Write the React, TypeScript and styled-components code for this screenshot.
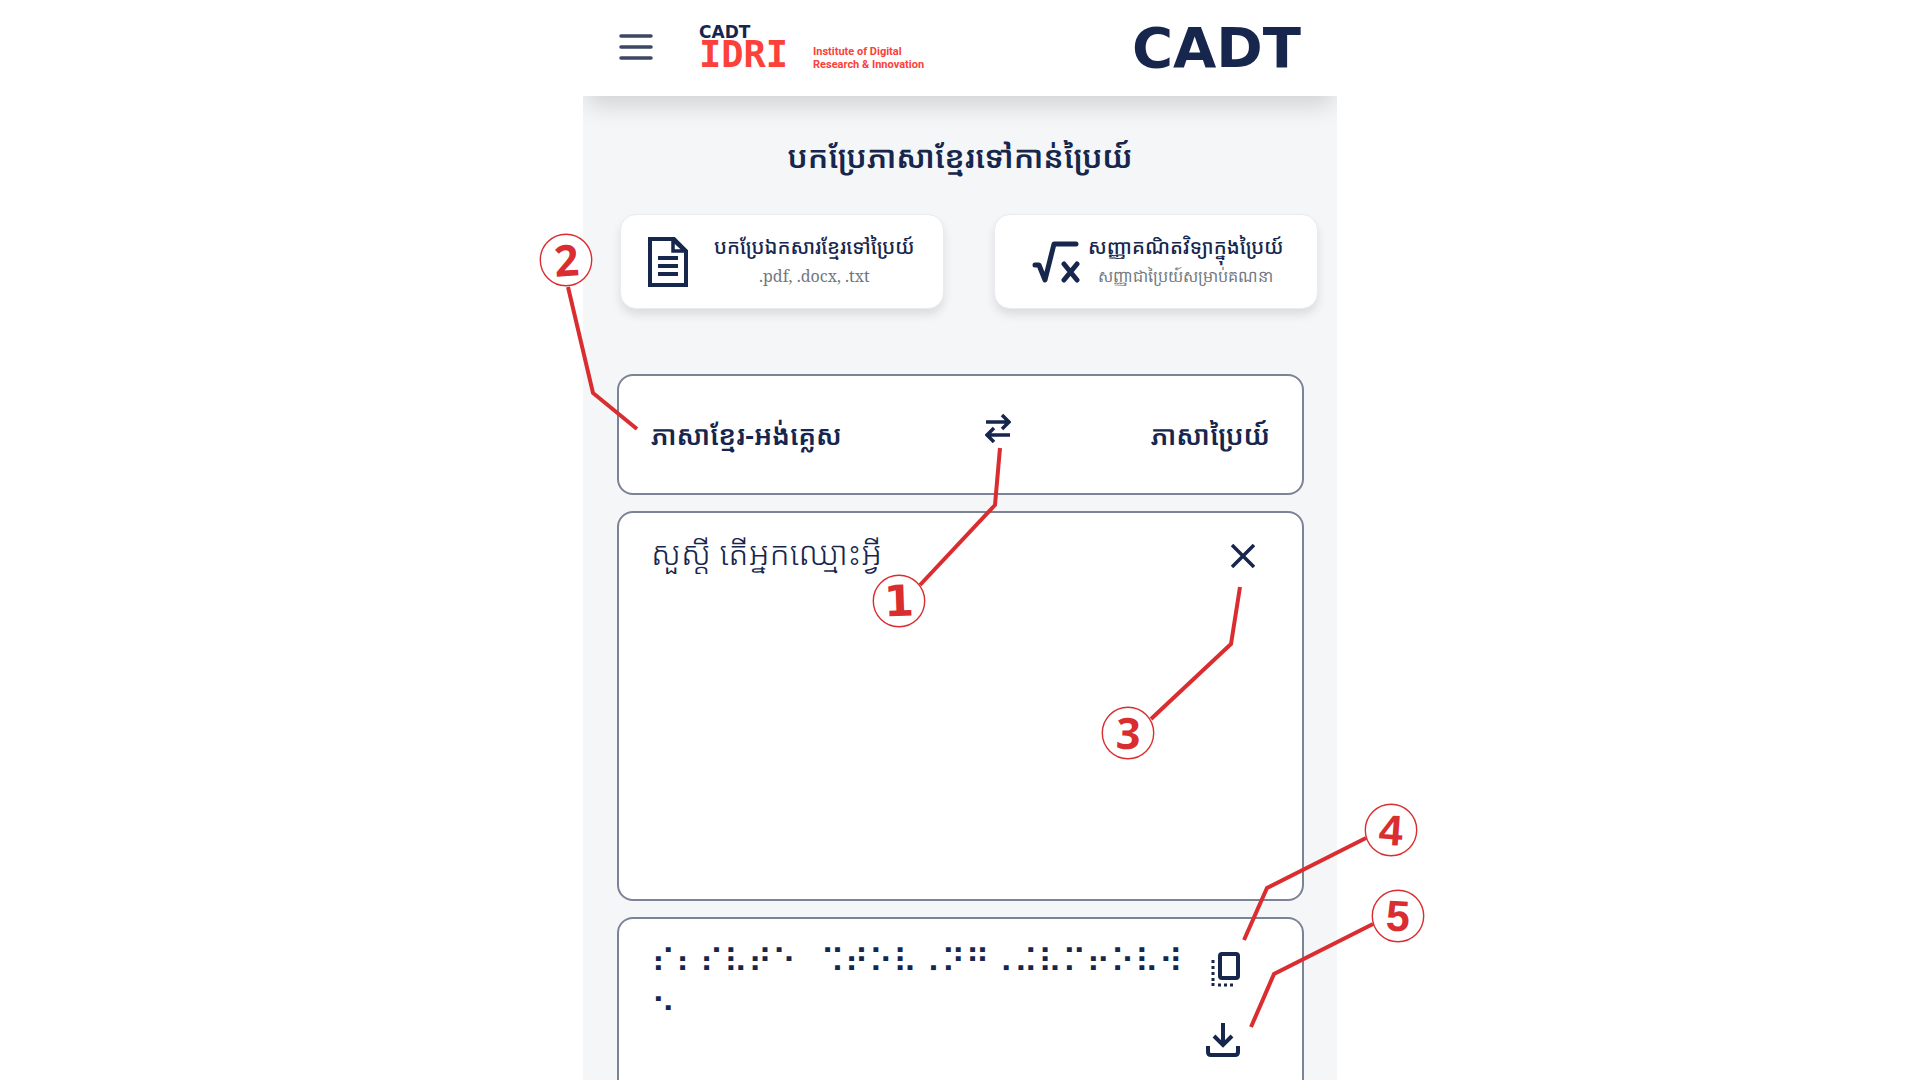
import React from "react";
import styled, { createGlobalStyle } from "styled-components";

const NAVY = "#16264c";
const RED = "#d92d2f";
const KHMER = '"Noto Sans Khmer", "Khmer OS Siemreap", "Noto Sans", sans-serif';

const GlobalStyle = createGlobalStyle`
  * { box-sizing: border-box; }
  body { margin: 0; background: #fff; color: ${NAVY}; font-family: ${KHMER}; }
  button { margin: 0; padding: 0; border: 0; background: none; color: inherit; font: inherit; cursor: pointer; }
  svg { display: block; }
  h1, p { margin: 0; }
`;

const Page = styled.div`
  display: flex;
  justify-content: center;
  overflow: hidden;
`;

const Screen = styled.div`
  position: relative;
  display: flex;
  flex-direction: column;
  width: 100%;
  max-width: 754px;
  min-height: 100vh;
  background: #f4f6f8;
`;

const Header = styled.header`
  display: flex;
  align-items: center;
  height: 96px;
  padding: 0 36px;
  background: #fff;
  box-shadow: 0 12px 24px -4px rgba(0, 0, 0, 0.16);
  clip-path: inset(0 0 -48px 0);
`;

const Menu = styled.button`
  margin-right: 46px;
`;

const Institute = styled.a`
  display: grid;
  grid-template-columns: 114px auto;
  align-items: end;
  color: #fb4139;
  font-family: "DejaVu Sans", sans-serif;
  font-weight: 700;
  text-decoration: none;
`;

const InstituteParent = styled.span`
  grid-column: 1 / -1;
  color: ${NAVY};
  font-size: 17px;
  line-height: 14px;
`;

const InstituteShort = styled.span`
  font-family: "DejaVu Sans Mono", monospace;
  font-size: 37px;
  line-height: 32px;
`;

const InstituteName = styled.span`
  font-family: Roboto, sans-serif;
  font-size: 11px;
  line-height: 13px;
`;

const Brand = styled.a`
  margin-left: auto;
  color: ${NAVY};
  font-family: "DejaVu Sans", sans-serif;
  font-size: 56px;
  font-weight: 700;
  line-height: 64px;
  text-decoration: none;
`;

const Title = styled.h1`
  padding-top: 36px;
  font-size: 31px;
  font-weight: 600;
  line-height: 48px;
  text-align: center;
`;

const Shortcuts = styled.div`
  display: grid;
  grid-template-columns: 1fr 1fr;
  gap: 50px;
  padding: 34px 19px 0 37px;
`;

const Shortcut = styled.button<{ $gap: number; $inset: number }>`
  display: flex;
  align-items: center;
  gap: ${(p) => p.$gap}px;
  height: 95px;
  padding-left: ${(p) => p.$inset}px;
  border: 1px solid #e9ebef;
  border-radius: 16px;
  background: #fff;
  box-shadow: 0 6px 10px rgba(0, 0, 0, 0.1);
  white-space: nowrap;
`;

const ShortcutText = styled.span`
  display: flex;
  flex-direction: column;
  align-items: center;
  padding-bottom: 2px;
`;

const ShortcutTitle = styled.span`
  font-size: 20px;
  font-weight: 500;
  line-height: 30px;
`;

const ShortcutNote = styled.span`
  color: #6f7780;
  font-family: "Noto Serif", "DejaVu Serif", serif;
  font-size: 16px;
  line-height: 28px;
`;

const Boxes = styled.main`
  display: flex;
  flex: 1;
  flex-direction: column;
  gap: 16px;
  padding: 65px 33px 0 34px;
`;

const Box = styled.section`
  display: flex;
  justify-content: space-between;
  border: 2px solid #7a8496;
  border-radius: 16px;
  background: #fff;
`;

const Languages = styled(Box)`
  display: grid;
  grid-template-columns: 1fr auto 1fr;
  align-items: center;
  height: 121px;
  padding: 0 32px;
  font-size: 27px;
  font-weight: 600;
`;

const Language = styled.span<{ $end?: boolean }>`
  text-align: ${(p) => (p.$end ? "right" : "left")};
  white-space: nowrap;
`;

const Swap = styled.button`
  padding: 0 0 14px 74px;
`;

const Source = styled(Box)`
  height: 390px;
  padding: 15px 47px 15px 32px;
  align-items: flex-start;
`;

const SourceInput = styled.textarea`
  flex: 1;
  height: 340px;
  padding: 0;
  border: 0;
  outline: 0;
  background: none;
  resize: none;
  color: ${NAVY};
  font-family: ${KHMER};
  font-size: 33px;
  font-weight: 300;
  line-height: 50px;
`;

const Clear = styled.button`
  margin-top: 16px;
`;

const Result = styled(Box)`
  flex: 1;
  border-bottom: 0;
  border-radius: 16px 16px 0 0;
  padding: 18px 62px 0 32px;
`;

const Braille = styled.p`
  width: 540px;
  font-family: "DejaVu Sans", sans-serif;
  font-size: 33px;
  line-height: 49px;
`;

const Tools = styled.div`
  display: flex;
  flex-direction: column;
  align-items: flex-end;
  gap: 36px;
  padding-top: 15px;
`;

const Callouts = styled.div`
  position: absolute;
  inset: 0;
  pointer-events: none;
`;

const Leaders = styled.svg`
  position: absolute;
  top: 0;
  left: 0;
  overflow: visible;
`;

const Marker = styled.span<{ $x: number; $y: number; $turn: number; $face: string }>`
  position: absolute;
  top: ${(p) => p.$y - 26}px;
  left: ${(p) => p.$x - 26}px;
  display: flex;
  align-items: center;
  justify-content: center;
  width: 52px;
  height: 52px;
  color: ${RED};
  font-family: ${(p) => p.$face}, sans-serif;
  font-size: 43px;
  font-weight: 700;
  line-height: 54px;

  span { transform: rotate(${(p) => p.$turn}deg); }
`;

const markers = [
  { n: 1, x: 316, y: 601, turn: -2, face: '"DejaVu Sans"', line: "337,585 412,505 417,448" },
  { n: 2, x: -17, y: 260, turn: -4, face: '"Noto Sans"', line: "-15,287 10,393 54,429" },
  { n: 3, x: 545, y: 733, turn: 2, face: '"Noto Sans"', line: "568,719 648,644 657,587" },
  { n: 4, x: 808, y: 830, turn: 4, face: '"Liberation Sans"', line: "783,838 684,888 661,940" },
  { n: 5, x: 815, y: 916, turn: 3, face: '"Liberation Sans"', line: "790,924 691,974 668,1027" },
];

export default function App() {
  return (
    <Page>
      <GlobalStyle />
      <Screen>
        <Header>
          <Menu aria-label="Menu">
            <svg width="34" height="28" viewBox="0 0 34 28" stroke="#3c4763" strokeWidth="3.5" strokeLinecap="round">
              <path d="M2 2h30M2 13h30M2 24h30" />
            </svg>
          </Menu>
          <Institute href="#">
            <InstituteParent>CADT</InstituteParent>
            <InstituteShort>IDRI</InstituteShort>
            <InstituteName>
              Institute of Digital
              <br />
              Research &amp; Innovation
            </InstituteName>
          </Institute>
          <Brand href="#">CADT</Brand>
        </Header>

        <Title>បកប្រែភាសាខ្មែរទៅកាន់ប្រៃយ៍</Title>

        <Shortcuts>
          <Shortcut $gap={26} $inset={27}>
            <svg width="40" height="50" viewBox="0 0 40 50" fill="none" stroke={NAVY} strokeWidth="4">
              <path d="M2 2h24l12 12v34H2z" />
              <path d="M25 3v11h12z" fill="#fff" strokeWidth="3.5" />
              <path d="M10 21h20M10 29h20M10 37h20" />
            </svg>
            <ShortcutText>
              <ShortcutTitle>បកប្រែឯកសារខ្មែរទៅប្រៃយ៍</ShortcutTitle>
              <ShortcutNote>.pdf, .docx, .txt</ShortcutNote>
            </ShortcutText>
          </Shortcut>
          <Shortcut $gap={6} $inset={37}>
            <svg width="50" height="44" viewBox="0 0 50 44" fill="none" stroke={NAVY} strokeWidth="5" strokeLinecap="round" strokeLinejoin="round">
              <path d="M3 25h4l6 15L22 4h22M32 24l13 16M45 24L32 40" />
            </svg>
            <ShortcutText>
              <ShortcutTitle>សញ្ញាគណិតវិទ្យាក្នុងប្រៃយ៍</ShortcutTitle>
              <ShortcutNote>សញ្ញាជាប្រៃយ៍សម្រាប់គណនា</ShortcutNote>
            </ShortcutText>
          </Shortcut>
        </Shortcuts>

        <Boxes>
          <Languages>
            <Language>ភាសាខ្មែរ-អង់គ្លេស</Language>
            <Swap aria-label="Swap languages">
              <svg width="26" height="30" viewBox="0 0 26 30" fill="none" stroke={NAVY} strokeWidth="3.5">
                <path d="M1 9h22M17 2l7 7-7 7M25 22H3M9 15l-7 7 7 7" />
              </svg>
            </Swap>
            <Language $end>ភាសាប្រៃយ៍</Language>
          </Languages>

          <Source>
            <SourceInput aria-label="Khmer text" defaultValue="សួស្តី តើអ្នកឈ្មោះអ្វី" />
            <Clear aria-label="Clear">
              <svg width="24" height="24" viewBox="0 0 24 24" stroke={NAVY} strokeWidth="3.5">
                <path d="M1 1l22 22M23 1L1 23" />
              </svg>
            </Clear>
          </Source>

          <Result>
            <Braille>{"⠎⠆⠎⠧⠞⠑\u2800⠩⠞⠕⠧⠠⠝⠛⠠⠬⠧⠍⠖⠕⠧⠺ ⠑"}</Braille>
            <Tools>
              <button aria-label="Copy">
                <svg width="30" height="35" viewBox="0 0 30 35" fill="none" stroke={NAVY}>
                  <rect x="10" y="2" width="18" height="24" rx="2" strokeWidth="4" />
                  <path d="M3 8v3M3 14v3M3 20v3M3 26v3M3 31v3M8 33h3M14 33h3M20 33h3" strokeWidth="3" />
                </svg>
              </button>
              <button aria-label="Download">
                <svg width="34" height="34" viewBox="0 0 34 34" fill="none" stroke={NAVY} strokeWidth="4">
                  <path d="M17 0v22M8 13l9 9 9-9M2 23v6q0 3 3 3h24q3 0 3-3v-6" />
                </svg>
              </button>
            </Tools>
          </Result>
        </Boxes>

        <Callouts>
          <Leaders width="754" height="1080" fill="none" stroke={RED}>
            {markers.map((m) => (
              <g key={m.n}>
                <polyline points={m.line} strokeWidth="4" />
                <circle cx={m.x} cy={m.y} r="25.7" fill="#fff" strokeWidth="1.4" />
              </g>
            ))}
          </Leaders>
          {markers.map((m) => (
            <Marker key={m.n} $x={m.x} $y={m.y} $turn={m.turn} $face={m.face}>
              <span>{m.n}</span>
            </Marker>
          ))}
        </Callouts>
      </Screen>
    </Page>
  );
}
